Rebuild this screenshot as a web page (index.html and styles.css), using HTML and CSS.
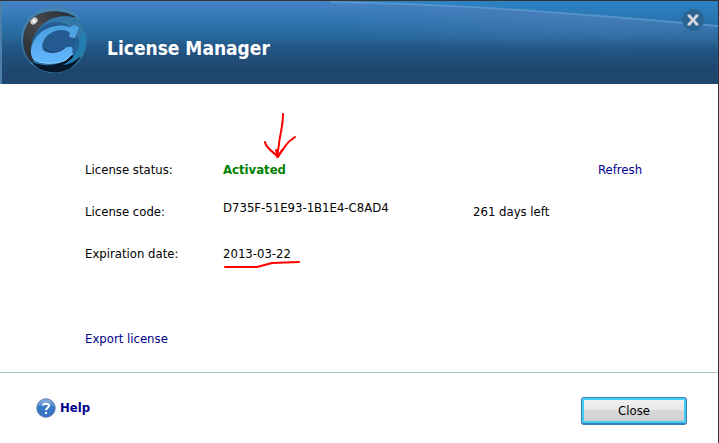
FILE: index.html
```html
<!DOCTYPE html>
<html lang="en">
<head>
<meta charset="utf-8">
<meta name="viewport" content="width=device-width, initial-scale=1">
<title>License Manager</title>
<link rel="stylesheet" href="styles.css">
</head>
<body>
<div class="window">
  <header class="header">
    <svg class="swoosh" viewBox="0 0 719 83" preserveAspectRatio="none" aria-hidden="true">
      <defs>
        <linearGradient id="sky" x1="0" y1="0" x2="0" y2="1">
          <stop offset="0" stop-color="#2d83c5"/><stop offset="1" stop-color="#286fa8"/>
        </linearGradient>
        <radialGradient id="haze" cx=".8" cy=".15" r=".6">
          <stop offset="0" stop-color="#5080bb" stop-opacity=".75"/><stop offset="1" stop-color="#4a78b0" stop-opacity="0"/>
        </radialGradient>
      </defs>
      <path d="M200 0H719V70H200Z" fill="url(#haze)"/>
      <path d="M300 0C450 1 550 10 719 25V0Z" fill="url(#sky)"/>
      <path d="M330 1C450 3 550 10 719 25" fill="none" stroke="#5b9bd0" stroke-width="2" opacity=".75"/>
    </svg>
    <svg class="logo" viewBox="0 0 68 70" aria-hidden="true">
      <defs>
        <radialGradient id="orb" cx=".5" cy=".42" r=".55">
          <stop offset="0" stop-color="#235b91"/><stop offset=".7" stop-color="#236397"/><stop offset="1" stop-color="#337da9"/>
        </radialGradient>
        <linearGradient id="letter" x1="0" y1="0" x2="0" y2="1">
          <stop offset="0" stop-color="#4a9fdf"/><stop offset="1" stop-color="#62b6ff"/>
        </linearGradient>
        <linearGradient id="ring" x1="0" y1="1" x2="1" y2="0">
          <stop offset="0" stop-color="#202933"/><stop offset=".5" stop-color="#4b4a4b"/><stop offset="1" stop-color="#202b38"/>
        </linearGradient>
      </defs>
      <circle cx="34" cy="35" r="33" fill="url(#orb)"/>
      <path d="M2 40C-1 17 15 1 36 2C48 3 57 8 62 17C50 8 29 3 16 13C7 20 4 30 2 40Z" fill="#4583b2"/>
      <path d="M11 57C0 45 1 25 11 14C21 5 43 3 57 13C40 8 24 14 16 27C10 37 10 47 14 57Z" fill="url(#ring)"/>
      <path d="M16 29C23 14 40 8 56 13C66 22 69 38 62 49C60 30 52 18 38 17C27 16 20 22 16 29Z" fill="#3478aa"/>
      <path d="M12 57C24 62 40 62 52 50C55 55 58 54 61 51C54 64 42 69 30 67C21 66 15 62 12 57Z" fill="#07182d"/>
      <path d="M43 60C56 53 62 42 60 27L65 29C69 44 58 59 43 60Z" fill="#217eaf"/>
      <path d="M17 30C25 17 45 16 56 29L54 43C45 54 23 55 15 47Z" fill="#235b91"/>
      <path d="M59 22L54 20L50 22C39 18 26 22 19 29C11 37 8 49 14 55C22 60 38 59 46 55C51 52 54 46 52 42L47 42L41 46C35 48 27 49 23 45C20 38 26 29 35 26C41 24 48 25 50 28L49 32L55 33Z" fill="url(#letter)"/>
      <path d="M14 54C19 59 36 60 46 55L53 48" fill="none" stroke="#8bd0ff" stroke-width="1"/>
      <path d="M25 44C30 49 38 48 44 43" fill="none" stroke="#173e68" stroke-width="1"/>
      <ellipse cx="14" cy="16" rx="4" ry="3" fill="#ccc" transform="rotate(-45 14 16)"/>
      <circle cx="14" cy="16" r="1.5" fill="#fff"/>
    </svg>
    <h1 class="title">License Manager</h1>
    <button class="dismiss" type="button" aria-label="Close window">
      <svg viewBox="0 0 22 22" aria-hidden="true"><path d="M5 5H8L11 9L14 5H17V7L13 11L17 15V17H14L11 13L8 17H5V15L9 11L5 7Z" fill="#d4d8dc"/></svg>
    </button>
  </header>
  <main class="content">
    <dl class="details">
      <dt>License status:</dt>
      <dd class="marked"><strong class="status">Activated</strong>
        <svg class="arrow" viewBox="0 0 36 50" aria-hidden="true"><path d="M20 2C20 14 17 22 16 32L14 45M2 30C3 36 9 39 13 43M14 45C20 39 23 31 28 28L32 25"/><path d="M13 38L15 45L19 38"/></svg>
      </dd>
      <dd class="refresh"><a href="#refresh">Refresh</a></dd>
      <dt>License code:</dt>
      <dd class="code">D735F-51E93-1B1E4-C8AD4</dd>
      <dd>261 days left</dd>
      <dt>Expiration date:</dt>
      <dd class="marked">2013-03-22
        <svg class="underline" viewBox="0 0 80 12" aria-hidden="true"><path d="M2 7H34L49 3L76 2"/></svg>
      </dd>
    </dl>
    <a class="export" href="#export">Export license</a>
  </main>
  <footer class="footer">
    <a class="help" href="#help">
      <svg viewBox="0 0 20 20" aria-hidden="true">
        <defs><linearGradient id="ball" x1="0" y1="0" x2="0" y2="1"><stop offset="0" stop-color="#91b4dc"/><stop offset=".35" stop-color="#5b91d2"/><stop offset=".4" stop-color="#397bc8"/><stop offset="1" stop-color="#3974c4"/></linearGradient></defs>
        <circle cx="10" cy="10" r="9.2" fill="url(#ball)" stroke="#5478ac"/>
        <path d="M7 7.5C7 5 13 5 13 7.8C13 9.7 10 9.7 10 12.3" fill="none" stroke="#fff" stroke-width="2"/><path d="M9 14H11V16H9Z" fill="#fff"/>
      </svg>
      <span>Help</span>
    </a>
    <button class="close" type="button">Close</button>
  </footer>
</div>
</body>
</html>
```
FILE: styles.css
```css
* { box-sizing: border-box; }

body {
  margin: 0;
  background: #fff;
  color: #000;
  font: 13px/16px Tahoma, "DejaVu Sans Condensed", "DejaVu Sans", sans-serif;
}

.window {
  display: flex;
  flex-direction: column;
  min-height: 100vh;
  border-top: 1px solid #333;
  border-right: 1px solid #333;
}

.header {
  position: relative;
  display: flex;
  align-items: center;
  gap: 19px;
  padding: 4px 14px 9px 18px;
  border-left: 2px solid #4e7fab;
  background: linear-gradient(#4684c7, #2e75b2 25%, #276798 44%, #225686 56%, #1e466e 84%, #1e466e);
}

.swoosh {
  position: absolute;
  inset: 0;
  width: 100%;
  height: 100%;
}

.logo {
  position: relative;
  width: 68px;
  height: 70px;
}

.title {
  position: relative;
  flex: 1;
  margin: 0;
  padding-top: 16px;
  color: #fff;
  font: bold 19px/24px Tahoma, "DejaVu Sans Condensed", "DejaVu Sans", sans-serif;
}

.dismiss {
  position: relative;
  align-self: flex-start;
  width: 22px;
  height: 22px;
  margin-top: 4px;
  padding: 0;
  border: 1px solid #286595;
  border-radius: 50%;
  background: #2c6594;
}

.dismiss svg { display: block; width: 20px; height: 20px; }

.content {
  flex: 1;
  padding: 78px 0 24px 85px;
}

.details {
  display: grid;
  grid-template-columns: 138px 2fr 1fr 120px;
  row-gap: 26px;
  margin: 0 0 69px;
}

dt { grid-column: 1; }
dd { margin: 0; }
.refresh { grid-column: 4; }
.marked { position: relative; }
.status { color: #008000; }
.code { margin-top: -4px; margin-bottom: 4px; }

a { color: #00008b; text-decoration: none; }

.arrow,
.underline {
  position: absolute;
  fill: none;
  stroke: #f00;
  stroke-width: 2;
  stroke-linecap: round;
  stroke-linejoin: round;
}

.arrow { left: 40px; bottom: 16px; width: 36px; height: 50px; }
.underline { left: 0; top: 14px; width: 80px; height: 12px; }

.footer {
  display: flex;
  align-items: center;
  justify-content: space-between;
  padding: 24px 31px 18px 36px;
  border-top: 1px solid #aac8bb;
}

.help {
  display: flex;
  align-items: center;
  gap: 4px;
  padding-bottom: 6px;
  font-weight: bold;
}

.help svg { width: 20px; height: 20px; }

.close {
  width: 106px;
  height: 28px;
  padding: 0;
  border: 1px solid #397fb2;
  border-bottom-width: 2px;
  border-radius: 3px;
  background: linear-gradient(#f3f3f3, #e7e7e7 48%, #d9d9d9 49%, #cecece);
  box-shadow: inset 0 0 0 2px #43cdf5;
  color: #000;
  font: inherit;
}
```
